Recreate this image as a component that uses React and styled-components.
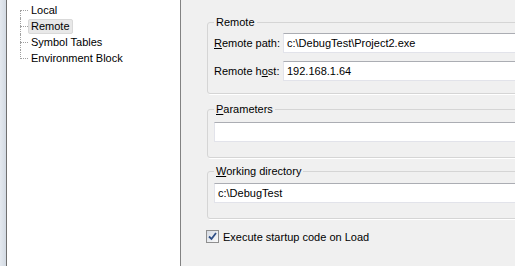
import React from "react";
import styled, { createGlobalStyle } from "styled-components";

const GlobalStyle = createGlobalStyle`
  html, body {
    margin: 0;
    padding: 0;
    background: #f0f0f0;
  }
  body {
    font-family: "Liberation Sans", Arial, sans-serif;
    font-size: 11px;
    color: #000;
  }
`;

const Window = styled.div`
  display: flex;
  height: 100vh;
  overflow: hidden;
  background: #f0f0f0;
`;

const Strip = styled.div`
  width: 6px;
  flex: none;
  background: linear-gradient(90deg, #e4e9ef, #d3dae3);
`;

const TreePanel = styled.div`
  width: 173px;
  flex: none;
  background: #fff;
  border-left: 1px solid #6f6f6f;
  border-right: 1px solid #828282;
  padding-top: 2px;
`;

const TreeList = styled.ul`
  list-style: none;
  margin: 0 0 0 13px;
  padding: 0;
`;

const TreeItem = styled.li`
  position: relative;
  height: 16px;
  padding-left: 8px;
  display: flex;
  align-items: center;

  &::before {
    content: "";
    position: absolute;
    left: 0;
    top: 8px;
    width: 8px;
    border-top: 1px dotted #a0a0a0;
  }

  &::after {
    content: "";
    position: absolute;
    left: 0;
    top: ${(p) => (p.$first ? "8px" : "0")};
    height: ${(p) => (p.$last ? "9px" : p.$first ? "8px" : "16px")};
    border-left: 1px dotted #a0a0a0;
  }
`;

const TreeLabel = styled.span`
  display: inline-block;
  padding: 0 2px;
  line-height: 13px;
  border: 1px solid ${(p) => (p.$selected ? "#d9d9d9" : "transparent")};
  border-radius: 2px;
  background: ${(p) => (p.$selected ? "#e8e8e8" : "transparent")};
  white-space: nowrap;
`;

const Content = styled.div`
  flex: 1;
  padding: 0 0 0 26px;
  overflow: hidden;
`;

const Group = styled.fieldset`
  width: 330px;
  margin: ${(p) => p.$top}px 0 0 0;
  padding: ${(p) => p.$padTop}px 6px ${(p) => p.$padBottom}px 6px;
  border: 1px solid #d5d5d5;
  border-radius: 3px;
  box-shadow: 1px 1px 0 #fff;
  min-inline-size: 0;
`;

const Legend = styled.legend`
  padding: 0 2px;
  line-height: 13px;
`;

const FieldRow = styled.div`
  display: flex;
  align-items: center;
  & + & {
    margin-top: 8px;
  }
`;

const FieldLabel = styled.label`
  width: 69px;
  flex: none;
  white-space: nowrap;
`;

const TextBox = styled.div`
  flex: 1;
  height: 18px;
  display: flex;
  align-items: center;
  padding-left: 3px;
  background: #fff;
  border: 1px solid #e2e3ea;
  border-top-color: #abadb3;
  white-space: nowrap;
`;

const CheckRow = styled.div`
  display: flex;
  align-items: center;
  gap: 4px;
  margin-top: 11px;
  margin-left: -1px;
`;

const CheckBox = styled.span`
  width: 11px;
  height: 11px;
  flex: none;
  border: 1px solid #8f8f8f;
  background: linear-gradient(135deg, #d6dbe3, #fbfbfb);
  display: flex;
  align-items: center;
  justify-content: center;
`;

const Key = styled.u`
  text-decoration: underline;
`;

const treeItems = ["Local", "Remote", "Symbol Tables", "Environment Block"];

export default function App() {
  return (
    <>
      <GlobalStyle />
      <Window>
        <Strip />
        <TreePanel>
          <TreeList>
            {treeItems.map((name, i) => (
              <TreeItem key={name} $first={i === 0} $last={i === treeItems.length - 1}>
                <TreeLabel $selected={name === "Remote"}>{name}</TreeLabel>
              </TreeItem>
            ))}
          </TreeList>
        </TreePanel>
        <Content>
          <Group $top={16} $padTop={4} $padBottom={12}>
            <Legend>Remote</Legend>
            <FieldRow>
              <FieldLabel><Key>R</Key>emote path:</FieldLabel>
              <TextBox>c:\DebugTest\Project2.exe</TextBox>
            </FieldRow>
            <FieldRow>
              <FieldLabel>Remote h<Key>o</Key>st:</FieldLabel>
              <TextBox>192.168.1.64</TextBox>
            </FieldRow>
          </Group>
          <Group $top={9} $padTop={6} $padBottom={15}>
            <Legend><Key>P</Key>arameters</Legend>
            <FieldRow>
              <TextBox />
            </FieldRow>
          </Group>
          <Group $top={7} $padTop={5} $padBottom={15}>
            <Legend><Key>W</Key>orking directory</Legend>
            <FieldRow>
              <TextBox>c:\DebugTest</TextBox>
            </FieldRow>
          </Group>
          <CheckRow>
            <CheckBox>
              <svg width="9" height="9" viewBox="0 0 9 9">
                <path d="M1 4.5 L3.5 7 L8 1" fill="none" stroke="#2f4f86" strokeWidth="1.8" />
              </svg>
            </CheckBox>
            <span>Execute startup code on Load</span>
          </CheckRow>
        </Content>
      </Window>
    </>
  );
}
